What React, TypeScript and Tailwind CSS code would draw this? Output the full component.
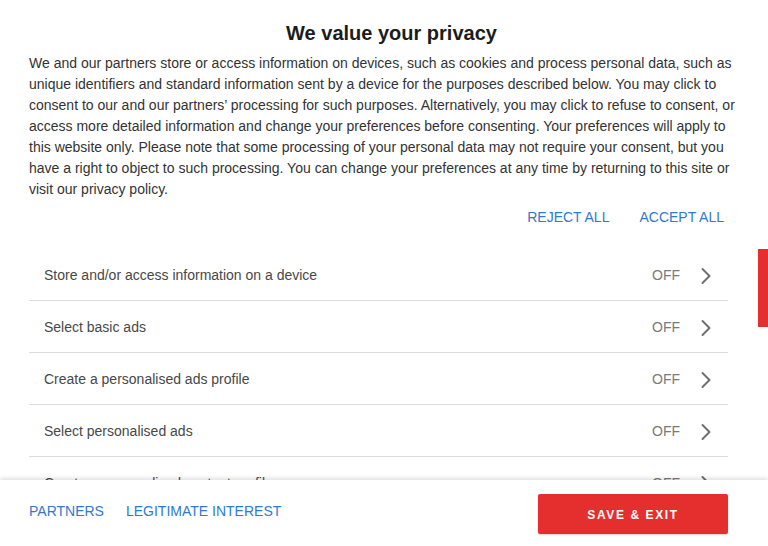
const PURPOSES = [
  "Store and/or access information on a device",
  "Select basic ads",
  "Create a personalised ads profile",
  "Select personalised ads",
  "Create a personalised content profile",
  "Select personalised content",
];

function Chevron() {
  return (
    <svg width="12" height="18" viewBox="0 0 12 18" fill="none" aria-hidden="true">
      <path d="M2.5 2 L9.5 9 L2.5 16" stroke="#6f6f6f" strokeWidth="2" strokeLinecap="round" strokeLinejoin="round" />
    </svg>
  );
}

export default function App() {
  return (
    <div
      className="relative flex h-[546px] w-full flex-col overflow-hidden bg-white"
      style={{ fontFamily: '"Liberation Sans", Arial, sans-serif' }}
    >
      <div className="h-[480px] shrink-0 overflow-hidden px-[29px]">
        <h1 className="pl-[15px] pt-[21px] text-center text-[20px] font-bold leading-[24px] text-[#1c1c1c]">
          We value your privacy
        </h1>
        <p className="mt-[8px] text-[14px] leading-[21px] text-[#333]">
          We and our partners store or access information on devices, such as cookies and process personal data, such as
          unique identifiers and standard information sent by a device for the purposes described below. You may click to
          consent to our and our partners’ processing for such purposes. Alternatively, you may click to refuse to consent, or
          access more detailed information and change your preferences before consenting. Your preferences will apply to
          this website only. Please note that some processing of your personal data may not require your consent, but you
          have a right to object to such processing. You can change your preferences at any time by returning to this site or
          visit our privacy policy.
        </p>
        <div className="mt-[7px] flex justify-end">
          <button className="px-[15px] text-[14px] leading-[20px] text-[#2f7ad0]">REJECT ALL</button>
          <button className="px-[15px] text-[14px] leading-[20px] text-[#2f7ad0]">ACCEPT ALL</button>
        </div>
        <ul className="mr-[11px] mt-[22px]">
          {PURPOSES.map((label) => (
            <li
              key={label}
              className="flex h-[52px] items-center border-b border-[#dcdcdc] pl-[15px] pr-[16px] pt-[2px] text-[14px]"
            >
              <span className="flex-1 text-[#484848]">{label}</span>
              <span className="mr-[20px] text-[#7a7a7a]">OFF</span>
              <Chevron />
            </li>
          ))}
        </ul>
      </div>

      <div className="relative z-10 flex flex-1 items-center justify-between bg-white pl-[29px] pr-[40px] shadow-[0_-2px_4px_rgba(0,0,0,0.12)]">
        <div className="flex gap-[22px] pb-[3px] text-[14px] text-[#2f7ad0]">
          <button>PARTNERS</button>
          <button>LEGITIMATE INTEREST</button>
        </div>
        <button className="mt-[2px] h-[40px] w-[190px] rounded-[2px] bg-[#e52e2e] pt-[2px] text-[12px] font-bold tracking-[1.6px] text-white shadow-[0_1px_2px_rgba(0,0,0,0.2)]">
          SAVE &amp; EXIT
        </button>
      </div>

      <div className="absolute right-0 top-[249px] h-[78px] w-[10px] bg-[#e52e2e]" />
    </div>
  );
}
